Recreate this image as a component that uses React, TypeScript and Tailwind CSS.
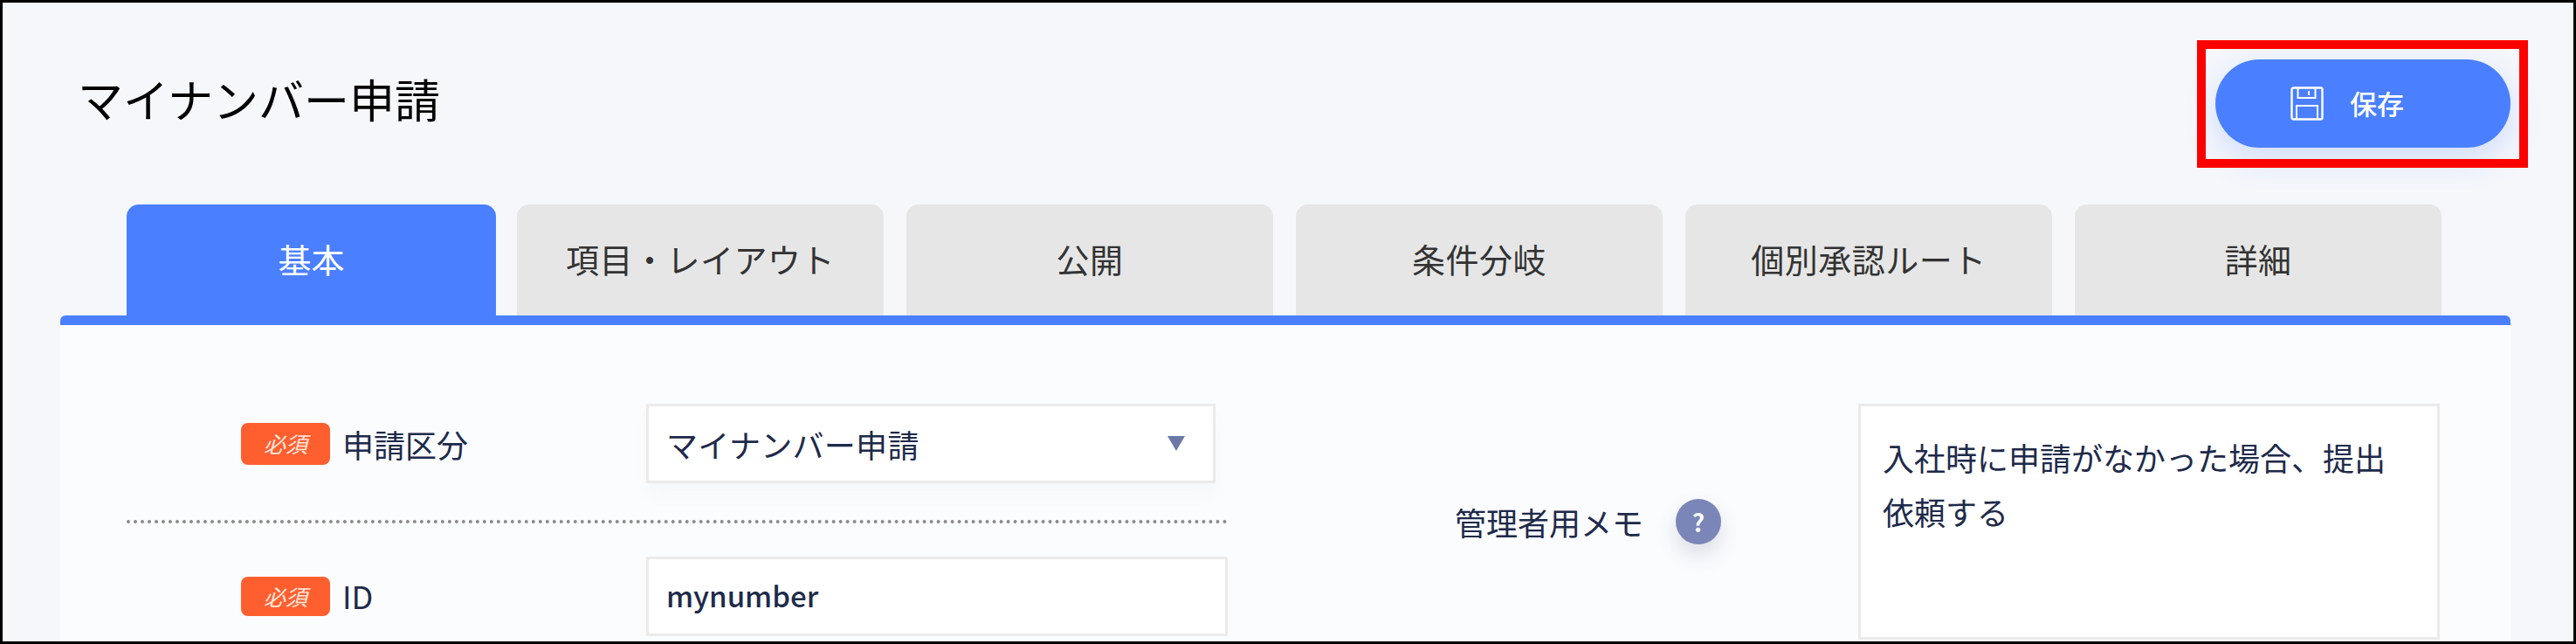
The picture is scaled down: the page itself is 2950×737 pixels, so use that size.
const tabs = ["基本", "項目・レイアウト", "公開", "条件分岐", "個別承認ルート", "詳細"];

function RequiredBadge({ className }: { className: string }) {
  return (
    <span className={`flex w-[102px] items-center justify-center rounded-[8px] bg-[#ff5f2e] text-[25px] italic leading-none text-[#ffe9e0] ${className}`}>
      必須
    </span>
  );
}

function SaveIcon() {
  return (
    <svg width="38" height="39" viewBox="0 0 38 39" fill="none" stroke="white" strokeWidth="2.4">
      <path d="M3.5 1.5H34.5C35.6 1.5 36.5 2.4 36.5 3.5V35.5C36.5 36.6 35.6 37.5 34.5 37.5H3.5C2.4 37.5 1.5 36.6 1.5 35.5V3.5C1.5 2.4 2.4 1.5 3.5 1.5Z" />
      <path d="M8.5 2V13H28.5V2" strokeWidth="2" />
      <path d="M7 37V22H31V37" strokeWidth="2" />
      <path d="M21 5V10" strokeWidth="2" />
    </svg>
  );
}

export default function App() {
  return (
    <div className="flex h-[737px] w-[2950px] flex-col overflow-hidden border-[3px] border-black bg-[#f5f7fb] font-['Noto_Sans_CJK_JP',sans-serif]">
      {/* header */}
      <div className="flex h-[231px] shrink-0 items-start justify-between pl-[86px] pr-[72px] pt-[65px]">
        <h1 className="mt-[10px] text-[52px] font-normal leading-[70px] text-black">マイナンバー申請</h1>
        <div className="relative">
          <button className="flex h-[101px] w-[338px] items-center rounded-full bg-[#4a80ff] pl-[86px] text-[31px] font-medium text-white shadow-[0_12px_36px_rgba(74,128,255,0.22)]">
            <SaveIcon />
            <span className="ml-[30px]">保存</span>
          </button>
          <div className="absolute -bottom-[23px] -left-[21px] -right-[20px] -top-[22px] border-[10px] border-[#ff0000]" />
        </div>
      </div>

      {/* tabs */}
      <div className="flex h-[127px] shrink-0 gap-[26px] pl-[142px]">
        {tabs.map((tab, index) => (
          <div
            key={tab}
            className={
              index === 0
                ? "-mr-[2px] flex w-[423px] items-center justify-center rounded-t-[14px] bg-[#4a80ff] pb-[4px] text-[38px] text-white"
                : "flex w-[420px] items-center justify-center rounded-t-[14px] bg-[#e6e6e6] pb-[4px] text-[38px] tracking-[0.5px] text-[#333333]"
            }
          >
            {tab}
          </div>
        ))}
      </div>

      {/* panel */}
      <div className="ml-[66px] mr-[72px] flex flex-1 items-start rounded-t-[6px] border-t-[11px] border-[#4a80ff] bg-[#fbfcfe] pl-[76px] pt-[90px] text-[36px] text-[#1e2a4a]">
        <div className="w-[1261px] shrink-0">
          <div className="flex border-b-[4px] border-dotted border-[#8a8a8a] pb-[42px]">
            <div className="flex h-[91px] w-[595px] items-center pl-[131px]">
              <RequiredBadge className="h-[48px]" />
              <span className="ml-[14px]">申請区分</span>
            </div>
            <div className="flex h-[91px] w-[652px] items-center justify-between border-[3px] border-[#ebebeb] bg-white pl-[20px] pr-[32px] shadow-[0_14px_24px_rgba(0,0,0,0.025)]">
              <span className="tracking-[0.3px]">マイナンバー申請</span>
              <svg width="20" height="17" viewBox="0 0 20 17" className="text-[#6b78a8]">
                <path d="M0 0H20L10 17Z" fill="currentColor" />
              </svg>
            </div>
          </div>
          <div className="mt-[38px] flex">
            <div className="flex h-[91px] w-[595px] items-center pl-[131px]">
              <RequiredBadge className="h-[45px]" />
              <span className="ml-[14px] pb-[4px]">ID</span>
            </div>
            <div className="flex h-[91px] w-[666px] items-center border-[3px] border-[#ebebeb] bg-white pb-[2px] pl-[20px] text-[33px] font-medium">
              mynumber
            </div>
          </div>
        </div>

        <div className="flex h-[270px] w-[722px] shrink-0 items-center justify-end pr-[157px]">
          <span>管理者用メモ</span>
          <span className="ml-[37px] flex h-[52px] w-[52px] items-center justify-center rounded-full bg-[#7b86b8] text-[28px] font-bold text-white shadow-[0_12px_24px_rgba(60,60,100,0.16)]">
            ?
          </span>
        </div>

        <div className="h-[270px] w-[666px] shrink-0 border-[3px] border-[#ebebeb] bg-white pl-[25px] pr-[30px] pt-[27px] text-[36px] leading-[62px]">
          入社時に申請がなかった場合、提出
          <br />
          依頼する
        </div>
      </div>
    </div>
  );
}
